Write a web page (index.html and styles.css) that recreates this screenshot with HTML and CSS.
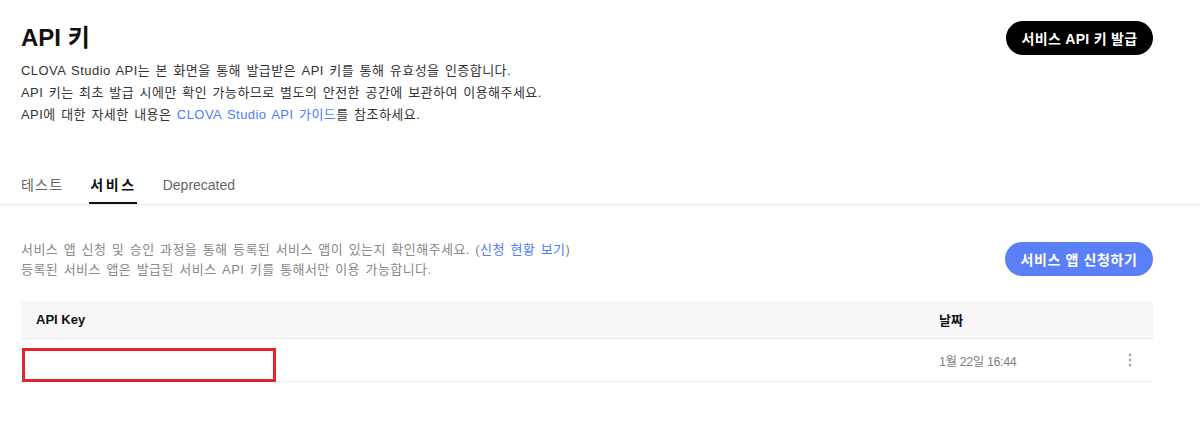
FILE: index.html
```html
<!DOCTYPE html>
<html lang="ko">
<head>
<meta charset="utf-8">
<title>API 키</title>
<link rel="stylesheet" href="styles.css">
</head>
<body>
<div class="head">
  <div class="title-row">
    <h1 class="title">API 키</h1>
    <button class="btn btn-black">서비스 API 키 발급</button>
  </div>
  <div class="intro">
    <p>CLOVA Studio API는 본 화면을 통해 발급받은 API 키를 통해 유효성을 인증합니다.</p>
    <p>API 키는 최초 발급 시에만 확인 가능하므로 별도의 안전한 공간에 보관하여 이용해주세요.</p>
    <p>API에 대한 자세한 내용은 <a class="link" href="#">CLOVA Studio API 가이드</a>를 참조하세요.</p>
  </div>
</div>
<nav class="tabs">
  <span class="tab ko">테스트</span>
  <span class="tab ko active">서비스</span>
  <span class="tab">Deprecated</span>
</nav>
<section class="body">
  <div class="desc-row">
    <div class="desc">
      <p>서비스 앱 신청 및 승인 과정을 통해 등록된 서비스 앱이 있는지 확인해주세요. (<a class="link" href="#">신청 현황 보기</a>)</p>
      <p>등록된 서비스 앱은 발급된 서비스 API 키를 통해서만 이용 가능합니다.</p>
    </div>
    <button class="btn btn-blue">서비스 앱 신청하기</button>
  </div>
  <div class="table">
    <div class="tr th">
      <div class="cell first">API Key</div>
      <div class="cell">날짜</div>
      <div class="cell"></div>
    </div>
    <div class="tr td">
      <div class="cell first"><span class="redact"></span></div>
      <div class="cell date">1월 22일 16:44</div>
      <div class="cell more">
        <svg width="4" height="14" viewBox="0 0 4 14"><circle cx="2" cy="2" r="1.2" fill="#9a9a9a"/><circle cx="2" cy="7" r="1.2" fill="#9a9a9a"/><circle cx="2" cy="12" r="1.2" fill="#9a9a9a"/></svg>
      </div>
    </div>
  </div>
</section>
</body>
</html>
```
FILE: styles.css
```css
* { box-sizing: border-box; }
body {
  margin: 0;
  background: #fff;
  font-family: "Liberation Sans", Arial, "Noto Sans CJK KR", sans-serif;
  color: #222;
}
p { margin: 0; }
.link { color: #4f7bff; text-decoration: none; }

.head { padding: 21px 47px 0 21px; }
.title-row {
  display: flex;
  justify-content: space-between;
  align-items: center;
  height: 34px;
}
.title {
  margin: 0;
  font-size: 24px;
  font-weight: 700;
  line-height: 34px;
  color: #111;
}
.btn {
  border: 0;
  border-radius: 17px;
  height: 34px;
  font-family: inherit;
  font-weight: 700;
  color: #fff;
  cursor: pointer;
  padding: 0;
}
.btn-black {
  width: 147px;
  background: #000;
  font-size: 14px;
  letter-spacing: 0.3px;
}
.btn-blue {
  width: 148px;
  background: #5a80f9;
  font-size: 14px;
  letter-spacing: 0.6px;
  margin-top: 2px;
  align-self: flex-start;
}
.intro {
  margin-top: 5px;
  font-size: 13px;
  line-height: 22px;
  color: #333;
  letter-spacing: 0.45px;
  word-spacing: 1.4px;
}

.tabs {
  margin-top: 49px;
  padding-left: 21px;
  display: flex;
  gap: 26px;
  border-bottom: 1px solid #e8e8e8;
}
.tab {
  font-size: 14px;
  line-height: 20px;
  padding-bottom: 7px;
  border-bottom: 2px solid transparent;
  color: #666;
}
.tab.ko { letter-spacing: 1.2px; }
.tab.active {
  color: #111;
  font-weight: 700;
  letter-spacing: 2.6px;
  padding-left: 1px;
  border-bottom-color: #111;
}

.body { padding: 35px 47px 0 21px; }
.desc-row {
  display: flex;
  justify-content: space-between;
}
.desc {
  font-size: 13px;
  line-height: 20px;
  color: #888;
  letter-spacing: 0.45px;
  word-spacing: 1.4px;
}
.table { margin-top: 21px; }
.tr {
  display: grid;
  grid-template-columns: 918px 1fr 44px;
  align-items: center;
}
.th {
  height: 38px;
  background: #f7f7f7;
  border-bottom: 1px solid #e9e9e9;
  font-size: 13px;
  font-weight: 700;
  color: #111;
}
.td {
  position: relative;
  height: 43px;
  border-bottom: 1px solid #ececec;
  font-size: 13px;
  color: #808080;
}
.date {
  font-size: 12.5px;
  letter-spacing: -0.4px;
}
.cell.first { padding-left: 15px; }
.more {
  display: flex;
  justify-content: center;
  padding-right: 2px;
}
.redact {
  position: absolute;
  left: 1px;
  top: 9px;
  width: 254px;
  height: 34px;
  border: 3px solid #e3242b;
}
```
